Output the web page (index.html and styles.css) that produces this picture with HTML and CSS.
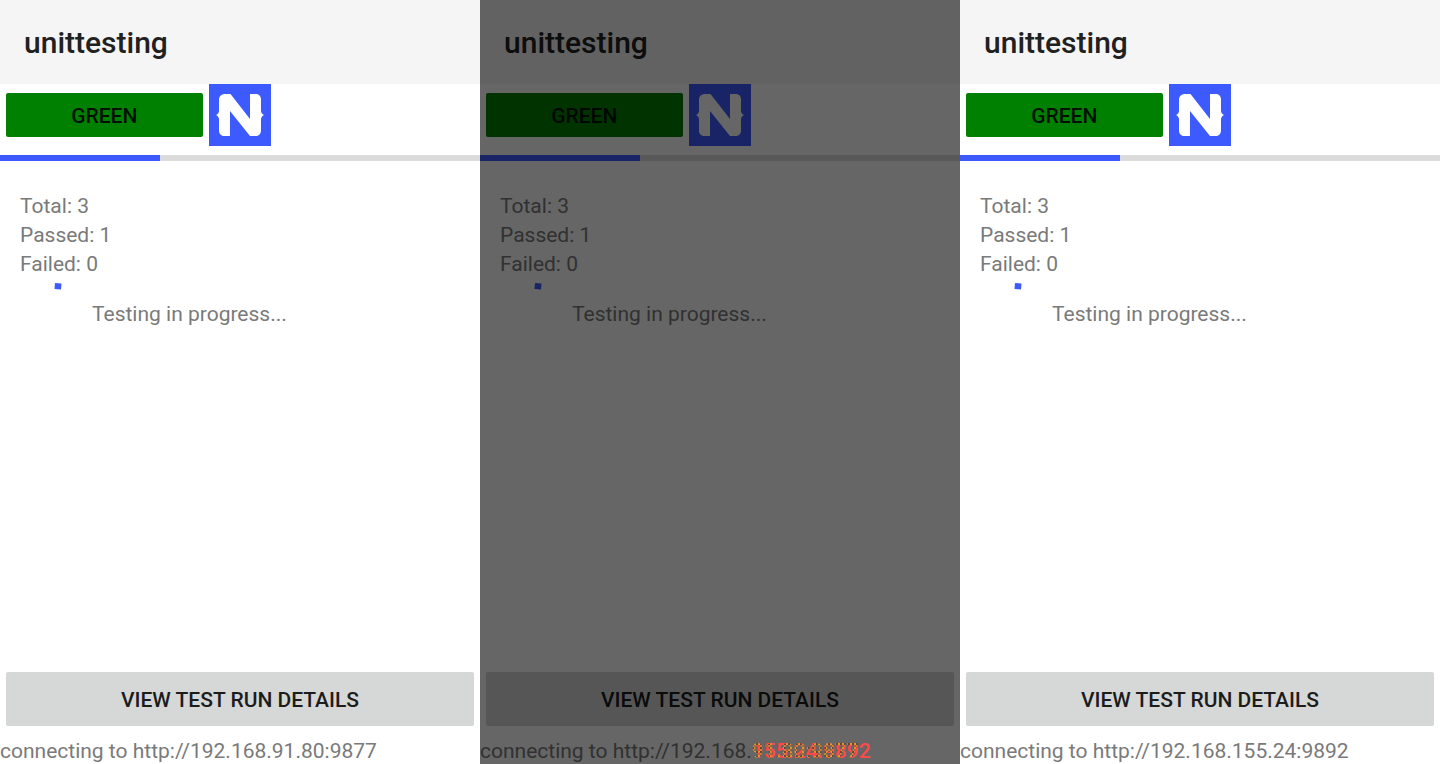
FILE: index.html
```html
<!DOCTYPE html>
<html lang="en">
<head>
<meta charset="utf-8">
<title>unittesting</title>
<link rel="stylesheet" href="styles.css">
</head>
<body>
<svg class="symbols" aria-hidden="true">
  <symbol id="logo" viewBox="0 0 62 62">
    <rect width="62" height="62" fill="#3c5afd"/>
    <path fill="#fff" d="M15 10H21.500L41 35V10H48Q51.700 11 52 15V26.500Q52 29.500 55 31Q52 32.500 52 35.500V47Q51.700 51 48 52H41L21 27V52H14Q10.300 51 10 47V35.500Q10 32.500 7 31Q10 29.500 10 26.500V15Q10.300 11 15 10Z"/>
  </symbol>
  <symbol id="spinner" viewBox="0 0 72 70">
    <path fill="#3c5afd" d="M35 4L41.500 4.500L41 10.500L34.500 10Z"/>
  </symbol>
</svg>
<main class="screens">
  <section class="screen">
    <header class="bar"><h1 class="title">unittesting</h1></header>
    <div class="tools">
      <button class="button green" type="button">GREEN</button>
      <svg class="logo" role="img" aria-label="NativeScript"><use href="#logo"/></svg>
    </div>
    <progress class="progress" value="1" max="3" aria-label="Test progress"></progress>
    <div class="results">
      <p>Total: 3</p>
      <p>Passed: 1</p>
      <p>Failed: 0</p>
      <div class="status"><svg class="spinner" aria-hidden="true"><use href="#spinner"/></svg><p>Testing in progress...</p></div>
    </div>
    <button class="button details" type="button">VIEW TEST RUN DETAILS</button>
    <p class="connection">connecting to http://192.168.91.80:9877</p>
  </section>
  <section class="screen dimmed">
    <header class="bar"><h1 class="title">unittesting</h1></header>
    <div class="tools">
      <button class="button green" type="button">GREEN</button>
      <svg class="logo" role="img" aria-label="NativeScript"><use href="#logo"/></svg>
    </div>
    <progress class="progress" value="1" max="3" aria-label="Test progress"></progress>
    <div class="results">
      <p>Total: 3</p>
      <p>Passed: 1</p>
      <p>Failed: 0</p>
      <div class="status"><svg class="spinner" aria-hidden="true"><use href="#spinner"/></svg><p>Testing in progress...</p></div>
    </div>
    <button class="button details" type="button">VIEW TEST RUN DETAILS</button>
    <p class="connection">connecting to http://192.168.<span class="diff"><span class="added">155.24:9892</span><span class="removed">91.80:9877</span></span></p>
  </section>
  <section class="screen">
    <header class="bar"><h1 class="title">unittesting</h1></header>
    <div class="tools">
      <button class="button green" type="button">GREEN</button>
      <svg class="logo" role="img" aria-label="NativeScript"><use href="#logo"/></svg>
    </div>
    <progress class="progress" value="1" max="3" aria-label="Test progress"></progress>
    <div class="results">
      <p>Total: 3</p>
      <p>Passed: 1</p>
      <p>Failed: 0</p>
      <div class="status"><svg class="spinner" aria-hidden="true"><use href="#spinner"/></svg><p>Testing in progress...</p></div>
    </div>
    <button class="button details" type="button">VIEW TEST RUN DETAILS</button>
    <p class="connection">connecting to http://192.168.155.24:9892</p>
  </section>
</main>
</body>
</html>
```
FILE: styles.css
```css
* { box-sizing: border-box; }
body {
  margin: 0;
  font-family: Roboto, "Liberation Sans", sans-serif;
  font-size: 21px;
  line-height: 29px;
  color: #7a7a7a;
  background: #fff;
}
p, h1 { margin: 0; }
.symbols { position: absolute; width: 0; height: 0; }
.screens {
  display: grid;
  grid-template-columns: repeat(3, minmax(0, 1fr));
  min-height: 100vh;
}
.screen { position: relative; display: flex; flex-direction: column; }
.bar { padding: 25px 24px 23px; background: #f5f5f5; }
.title { font-size: 30px; line-height: 36px; font-weight: 500; color: #212121; }
.tools { display: flex; align-items: center; gap: 6px; padding: 0 6px; }
.logo { display: block; width: 62px; height: 62px; }
.button {
  padding: 2px 0 0;
  border: 0;
  border-radius: 2px;
  font: inherit;
  font-weight: 500;
  color: #1b1c1c;
  background: #d6d7d7;
}
.green { width: 42%; height: 44px; color: #001000; background: #008000; }
.progress {
  appearance: none;
  display: block;
  width: 100%;
  height: 6px;
  margin-top: 9px;
  border: 0;
  background: #dbdbdb;
}
.progress::-webkit-progress-bar { background: #dbdbdb; }
.progress::-webkit-progress-value { background: #3c5afd; }
.results { flex: 1; padding: 31px 20px; }
.status { display: flex; align-items: center; }
.spinner { display: block; width: 72px; height: 70px; }
.details { height: 54px; margin: 0 6px; }
.connection { padding-top: 13px; line-height: 25px; white-space: nowrap; }
.dimmed::after {
  content: "";
  position: absolute;
  inset: 0;
  z-index: 1;
  background: rgba(0, 0, 0, 0.6);
  pointer-events: none;
}
.diff { position: relative; z-index: 2; }
.added { color: #ff4848; font-weight: 500; }
.removed {
  position: absolute;
  left: 0;
  top: 0;
  font-weight: 500;
  color: transparent;
  background: repeating-conic-gradient(#f0932b 0 25%, #9a6a35 0 50%, #e07f35 0 75%, #5a4a3a 0 100%) 0 0 / 4px 4px;
  background-clip: text;
  -webkit-background-clip: text;
}
```
